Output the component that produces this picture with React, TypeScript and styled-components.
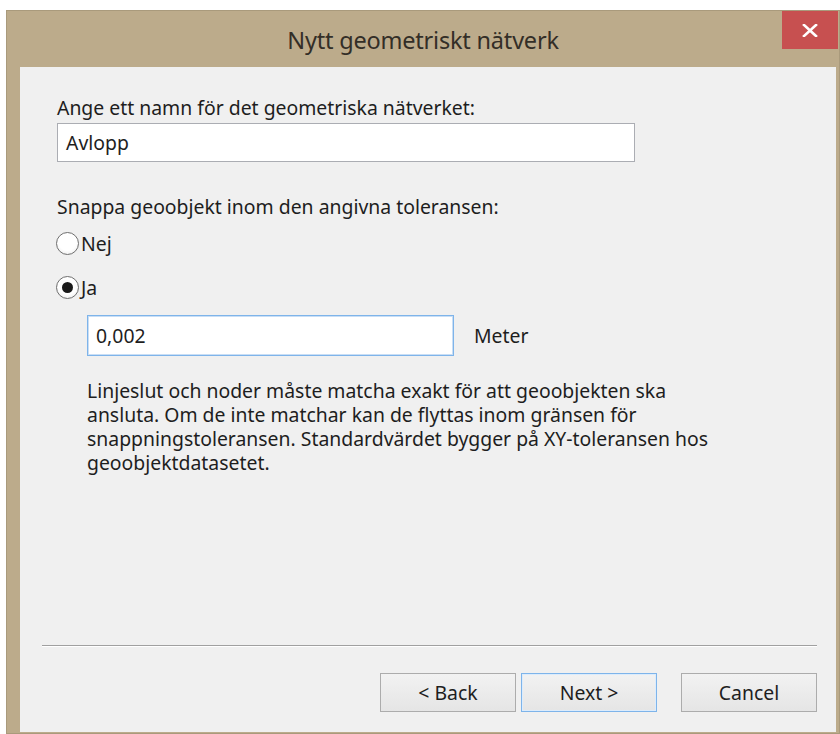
import { FC, ReactNode } from "react";
import styled, { createGlobalStyle, css } from "styled-components";

const GlobalStyle = createGlobalStyle`
  html, body {
    margin: 0;
    padding: 0;
    background: #ffffff;
  }
  body {
    font-family: "Noto Sans", "Open Sans", sans-serif;
    color: #1e1e1e;
  }
`;

const Window = styled.div`
  box-sizing: border-box;
  width: 834px;
  height: 724px;
  margin: 10px 0 0 6px;
  background: #bcab8b;
  border: 1px solid #a99a7c;
  display: flex;
  flex-direction: column;
`;

const TitleBar = styled.div`
  height: 56px;
  display: grid;
  grid-template-columns: 1fr auto 1fr;
`;

const Title = styled.div`
  grid-column: 2;
  align-self: center;
  font-size: 23.5px;
  color: #332e27;
  letter-spacing: -0.2px;
  padding-top: 2px;
`;

const CloseButton = styled.div`
  grid-column: 3;
  justify-self: end;
  width: 56px;
  height: 38px;
  margin-right: 1px;
  background: #c75050;
  display: flex;
  align-items: center;
  justify-content: center;
`;

const Panel = styled.div`
  flex: 1;
  margin: 0 3px 1px 13px;
  background: #f0f0f0;
  display: flex;
  flex-direction: column;
  padding: 29px 0 0 37px;
  font-size: 19.4px;
`;

const Label = styled.div<{ $gap?: number }>`
  line-height: 24px;
  margin-top: ${(p) => p.$gap ?? 0}px;
`;

const TextBox = styled.div<{ $width: number; $gap?: number; $focused?: boolean }>`
  box-sizing: border-box;
  width: ${(p) => p.$width}px;
  height: ${(p) => (p.$focused ? 41 : 39)}px;
  margin-top: ${(p) => p.$gap ?? 0}px;
  background: #ffffff;
  border: 1px solid ${(p) => (p.$focused ? "#7eb4ea" : "#abadb3")};
  ${(p) =>
    p.$focused &&
    css`
      box-shadow: inset 0 0 0 1px #c9def5;
    `}
  display: flex;
  align-items: center;
  padding-left: 8px;
`;

const RadioRow = styled.div<{ $gap: number }>`
  display: flex;
  align-items: center;
  gap: 2px;
  height: 24px;
  margin-top: ${(p) => p.$gap}px;
  margin-left: -1px;
`;

const RadioCircle = styled.span<{ $checked?: boolean }>`
  box-sizing: border-box;
  width: 23px;
  height: 23px;
  border-radius: 50%;
  border: 1.5px solid #6f6f6f;
  background: radial-gradient(circle at 50% 40%, #ffffff 55%, #e4e4e4 100%);
  display: flex;
  align-items: center;
  justify-content: center;
  &::after {
    content: "";
    display: ${(p) => (p.$checked ? "block" : "none")};
    width: 11px;
    height: 11px;
    border-radius: 50%;
    background: #1a1a1a;
  }
`;

const Indented = styled.div`
  margin-left: 30px;
  display: flex;
  flex-direction: column;
`;

const ToleranceRow = styled.div`
  display: flex;
  align-items: center;
  gap: 20px;
  margin-top: 16px;
`;

const Help = styled.p`
  margin: 23px 0 0;
  width: 640px;
  line-height: 24px;
`;

const Footer = styled.div`
  margin-top: auto;
  margin-left: -15px;
  padding-bottom: 20px;
`;

const Separator = styled.div`
  width: 775px;
  height: 0;
  border-top: 1px solid #a0a0a0;
  border-bottom: 1px solid #ffffff;
`;

const Buttons = styled.div`
  display: flex;
  justify-content: flex-end;
  width: 775px;
  margin-top: 26px;
`;

const Button = styled.div<{ $primary?: boolean; $space?: number }>`
  box-sizing: border-box;
  width: 136px;
  height: 39px;
  margin-left: ${(p) => p.$space ?? 0}px;
  border: 1px solid ${(p) => (p.$primary ? "#7eb4ea" : "#acacac")};
  background: linear-gradient(#f2f2f2, #e5e5e5);
  ${(p) =>
    p.$primary &&
    css`
      box-shadow: inset 0 0 0 1px #dcecfc;
    `}
  display: flex;
  align-items: center;
  justify-content: center;
`;

const Radio: FC<{ checked?: boolean; gap: number; children: ReactNode }> = ({
  checked,
  gap,
  children,
}) => (
  <RadioRow $gap={gap}>
    <RadioCircle $checked={checked} />
    <span>{children}</span>
  </RadioRow>
);

const App: FC = () => {
  return (
    <>
      <GlobalStyle />
      <Window>
        <TitleBar>
          <Title>Nytt geometriskt nätverk</Title>
          <CloseButton>
            <svg width="16" height="13" viewBox="0 0 16 13">
              <path
                d="M2 1 L14 12 M14 1 L2 12"
                stroke="#ffffff"
                strokeWidth="2.6"
                strokeLinecap="square"
              />
            </svg>
          </CloseButton>
        </TitleBar>
        <Panel>
          <Label>Ange ett namn för det geometriska nätverket:</Label>
          <TextBox $width={578} $gap={3}>
            Avlopp
          </TextBox>
          <Label $gap={33}>Snappa geoobjekt inom den angivna toleransen:</Label>
          <Radio gap={12}>Nej</Radio>
          <Radio gap={20} checked>
            Ja
          </Radio>
          <Indented>
            <ToleranceRow>
              <TextBox $width={367} $focused>
                0,002
              </TextBox>
              <span>Meter</span>
            </ToleranceRow>
            <Help>
              Linjeslut och noder måste matcha exakt för att geoobjekten ska
              ansluta. Om de inte matchar kan de flyttas inom gränsen för
              snappningstoleransen. Standardvärdet bygger på XY-toleransen hos
              geoobjektdatasetet.
            </Help>
          </Indented>
          <Footer>
            <Separator />
            <Buttons>
              <Button>&lt; Back</Button>
              <Button $primary $space={5}>
                Next &gt;
              </Button>
              <Button $space={24}>Cancel</Button>
            </Buttons>
          </Footer>
        </Panel>
      </Window>
    </>
  );
};

export default App;
